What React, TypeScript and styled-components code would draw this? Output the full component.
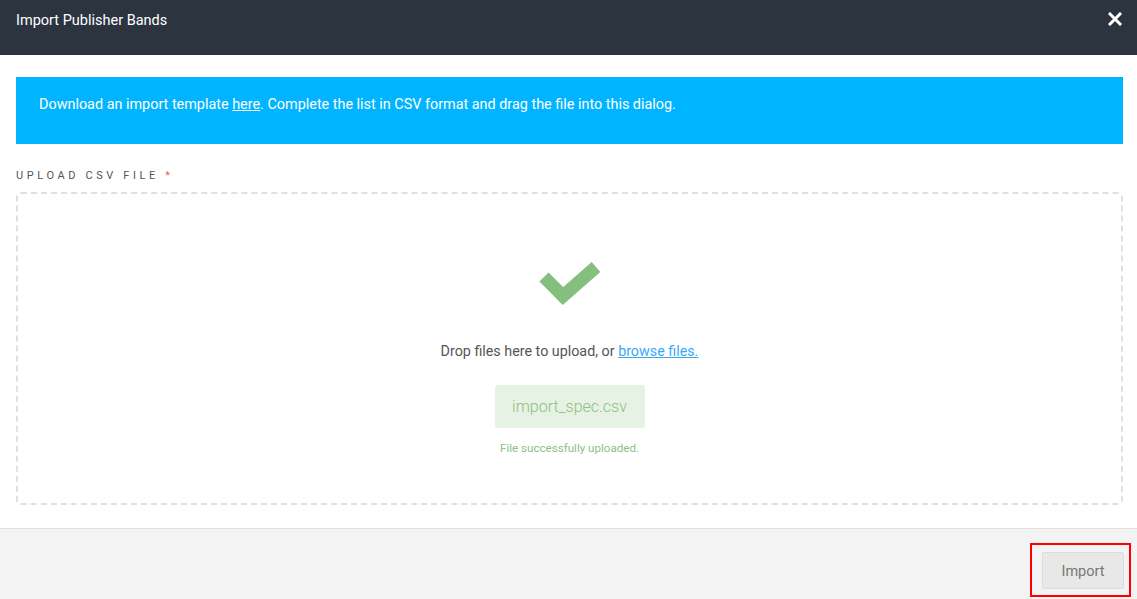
import React, { FC } from 'react';
import styled, { createGlobalStyle } from 'styled-components';

const GlobalStyle = createGlobalStyle`
  html, body {
    margin: 0;
    padding: 0;
    background: #fff;
  }
  body {
    font-family: Roboto, 'Liberation Sans', sans-serif;
    font-weight: 300;
    -webkit-font-smoothing: antialiased;
  }
`;

const Dialog = styled.div`
  width: 100%;
  height: 599px;
  display: flex;
  flex-direction: column;
  background: #fff;
  overflow: hidden;
`;

const Header = styled.div`
  height: 55px;
  box-sizing: border-box;
  padding: 11px 15px 0 16px;
  background: #2c3440;
  display: flex;
  justify-content: space-between;
  align-items: flex-start;
`;

const Title = styled.h1`
  margin: 1px 0 0;
  font-size: 14.5px;
  font-weight: 400;
  line-height: 18px;
  color: #fff;
`;

const CloseButton = styled.button`
  border: 0;
  padding: 0;
  margin-top: 1px;
  background: none;
  cursor: pointer;
  display: flex;
`;

const Body = styled.div`
  flex: 1;
  padding: 22px 14px 22px 16px;
  display: flex;
  flex-direction: column;
`;

const Banner = styled.div`
  background: #00b4ff;
  color: #fff;
  font-size: 14.4px;
  font-weight: 400;
  line-height: 18px;
  padding: 19px 23px 30px;

  a {
    color: #fff;
    text-decoration: underline;
  }
`;

const Label = styled.div`
  margin-top: 25px;
  font-size: 11px;
  font-weight: 400;
  line-height: 13px;
  letter-spacing: 3.6px;
  color: #555;
  text-transform: uppercase;
`;

const Required = styled.span`
  color: #f05a5a;
  letter-spacing: 0;
`;

const DropZone = styled.div`
  margin-top: 10px;
  height: 313px;
  box-sizing: border-box;
  border: 2px dashed #e0e0e0;
  border-radius: 5px;
  display: flex;
  flex-direction: column;
  align-items: center;
  padding-top: 68px;
`;

const DropText = styled.p`
  margin: 34px 0 0;
  font-size: 14.3px;
  font-weight: 400;
  line-height: 18px;
  color: #555;

  a {
    color: #3aa9f5;
    text-decoration: underline;
  }
`;

const FileChip = styled.div`
  margin-top: 25px;
  width: 150px;
  height: 43px;
  border-radius: 3px;
  background: #e6f2e4;
  color: #8cc185;
  font-size: 16px;
  display: flex;
  align-items: center;
  justify-content: center;
`;

const Status = styled.div`
  margin-top: 13px;
  font-size: 11.6px;
  font-weight: 400;
  color: #8cc185;
`;

const Footer = styled.div`
  height: 71px;
  box-sizing: border-box;
  border-top: 1px solid #dedede;
  background: #f3f3f3;
  display: flex;
  justify-content: flex-end;
  align-items: flex-start;
  padding: 14px 6px 0 0;
`;

const Highlight = styled.div`
  border: 2px solid #ff0000;
  padding: 7px 5px 6px 10px;
  display: flex;
`;

const ImportButton = styled.button`
  width: 82px;
  height: 37px;
  padding: 2px 0 0;
  border: 1px solid #dcdcdc;
  border-radius: 2px;
  background: #e8e8e8;
  color: #777;
  font-family: Roboto, 'Liberation Sans', sans-serif;
  font-size: 14.5px;
  font-weight: 400;
  cursor: pointer;
`;

const CloseIcon: FC = () => (
  <svg width="14" height="14" viewBox="0 0 14 14">
    <path d="M2 2 L12 12 M12 2 L2 12" stroke="#fff" strokeWidth="3" strokeLinecap="square" />
  </svg>
);

const CheckIcon: FC = () => (
  <svg width="62" height="46" viewBox="0 0 62 46">
    <polyline points="5,15 24,34 57,5" fill="none" stroke="#85bf7d" strokeWidth="13" />
  </svg>
);

const App: FC = () => (
  <>
    <GlobalStyle />
    <Dialog>
      <Header>
        <Title>Import Publisher Bands</Title>
        <CloseButton aria-label="Close">
          <CloseIcon />
        </CloseButton>
      </Header>
      <Body>
        <Banner>
          Download an import template <a href="#">here</a>. Complete the list in CSV format and drag the file into this dialog.
        </Banner>
        <Label>
          Upload CSV File <Required>*</Required>
        </Label>
        <DropZone>
          <CheckIcon />
          <DropText>
            Drop files here to upload, or <a href="#">browse files.</a>
          </DropText>
          <FileChip>import_spec.csv</FileChip>
          <Status>File successfully uploaded.</Status>
        </DropZone>
      </Body>
      <Footer>
        <Highlight>
          <ImportButton>Import</ImportButton>
        </Highlight>
      </Footer>
    </Dialog>
  </>
);

export default App;
